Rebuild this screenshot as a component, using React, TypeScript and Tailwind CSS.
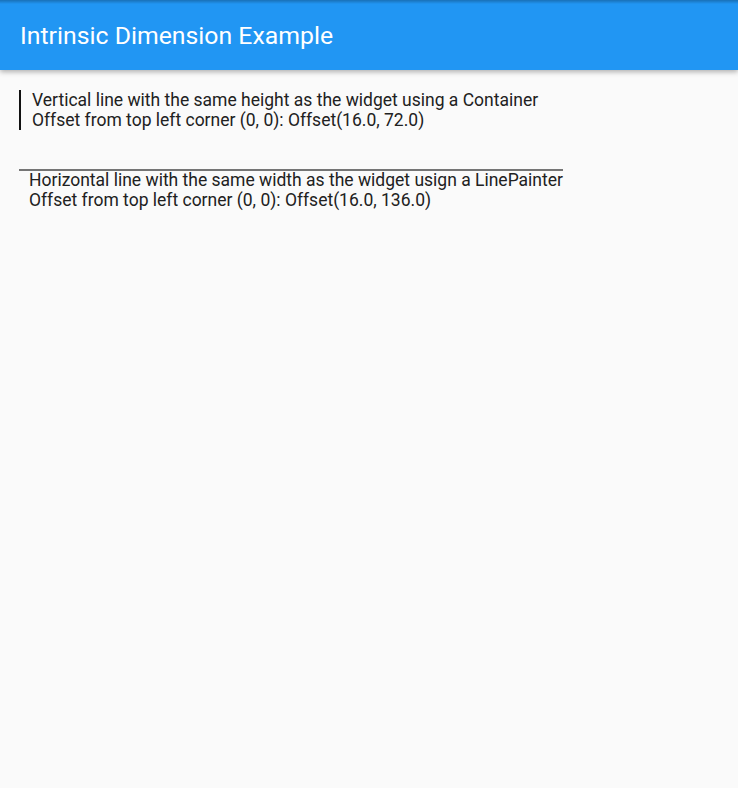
export default function App() {
  const font = { fontFamily: 'Roboto, "Noto Sans", sans-serif' };
  return (
    <div className="min-h-[788px] w-full bg-[#fafafa]" style={font}>
      {/* App bar */}
      <div className="relative h-[70px] bg-[#2196f3] shadow-[0_2px_5px_rgba(0,0,0,0.3)]">
        <div className="absolute inset-x-0 top-0 h-[4px] bg-gradient-to-b from-[rgba(0,0,0,0.25)] to-transparent" />
        <div className="flex h-full items-center pl-[20px] pt-[1px] text-[24.8px] text-white">
          Intrinsic Dimension Example
        </div>
      </div>

      <div className="flex flex-col items-start pl-[19px] pt-[20px]">
        {/* Vertical line widget */}
        <div className="flex">
          <div className="w-[2px] bg-[#111]" />
          <div className="pl-[11px] text-[17.5px] leading-[20px] text-[#212121]">
            <div>Vertical line with the same height as the widget using a Container</div>
            <div>Offset from top left corner (0, 0): Offset(16.0, 72.0)</div>
          </div>
        </div>

        {/* Horizontal line widget */}
        <div className="mt-[39px] flex flex-col">
          <div className="h-[2px] bg-[#757575]" />
          <div className="-mt-[1px] pl-[10px] text-[17.5px] leading-[20px] text-[#212121]">
            <div>Horizontal line with the same width as the widget usign a LinePainter</div>
            <div>Offset from top left corner (0, 0): Offset(16.0, 136.0)</div>
          </div>
        </div>
      </div>
    </div>
  );
}
